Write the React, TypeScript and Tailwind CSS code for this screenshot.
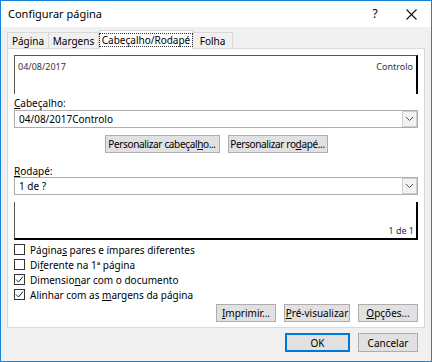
import React from 'react';

const font = { fontFamily: '"Noto Sans", "Liberation Sans", sans-serif' };

const Chevron = () => (
  <svg width="9" height="6" viewBox="0 0 9 6" fill="none">
    <path d="M1 1 L4.5 4.5 L8 1" stroke="#555" strokeWidth="1" />
  </svg>
);

const Select: React.FC<{ value: string }> = ({ value }) => (
  <div className="h-[18px] border border-[#adadad] bg-white flex items-center">
    <span className="flex-1 pl-[4px] text-[10px] leading-none">{value}</span>
    <div className="w-[15px] h-[16px] border border-[#cfcfcf] bg-[#f3f3f3] flex items-center justify-center">
      <Chevron />
    </div>
  </div>
);

const Button: React.FC<{ children: React.ReactNode; w: string; primary?: boolean }> = ({ children, w, primary }) => (
  <button
    className={
      'bg-[#e1e1e1] text-[10px] leading-none text-black flex items-center justify-center ' +
      w +
      (primary ? ' border-2 border-[#0078d7]' : ' border border-[#adadad]')
    }
  >
    <span className="whitespace-nowrap">{children}</span>
  </button>
);

const Check: React.FC<{ checked?: boolean; children: React.ReactNode }> = ({ checked, children }) => (
  <div className="h-[15px] flex items-center gap-[5px]">
    <div className="w-[11px] h-[11px] border border-[#333] bg-white flex items-center justify-center">
      {checked && (
        <svg width="9" height="9" viewBox="0 0 9 9" fill="none">
          <path d="M1 4.5 L3.5 7 L8 1.5" stroke="#222" strokeWidth="1" />
        </svg>
      )}
    </div>
    <span className="text-[10px] leading-none">{children}</span>
  </div>
);

export default function App() {
  return (
    <div style={font} className="w-[432px] h-[362px] border border-[#1883d7] bg-[#f0f0f0] flex flex-col text-black select-none">
      {/* title bar */}
      <div className="h-[26px] bg-white flex items-center pl-[7px]">
        <span className="text-[11px] flex-1">Configurar página</span>
        <span className="text-[12px] w-[14px] mr-[24px] text-center">?</span>
        <svg width="11" height="11" viewBox="0 0 11 11" className="mr-[14px]">
          <path d="M0.5 0.5 L10.5 10.5 M10.5 0.5 L0.5 10.5" stroke="#111" strokeWidth="1.1" />
        </svg>
      </div>

      {/* tabs */}
      <div className="h-[21px] px-[6px] flex items-end text-[10px] leading-none">
        <div className="h-[16px] w-[42px] border border-b-0 border-[#d9d9d9] flex items-center justify-center">Página</div>
        <div className="h-[16px] w-[50px] border border-l-0 border-b-0 border-[#d9d9d9] flex items-center justify-center">Margens</div>
        <div className="h-[19px] w-[94px] border border-b-0 border-[#d9d9d9] bg-white flex items-center justify-center relative z-10 -mb-[1px]">
          <span className="border border-dotted border-[#333] px-[2px] py-[1px]">Cabeçalho/Rodapé</span>
        </div>
        <div className="h-[16px] w-[40px] border border-l-0 border-b-0 border-[#d9d9d9] flex items-center justify-center">Folha</div>
      </div>

      {/* panel */}
      <div className="mx-[6px] h-[280px] border border-[#d9d9d9] bg-white px-[6px] pt-[6px] flex flex-col">
        <div className="h-[39px] border-t border-l border-[#555] border-r-2 border-r-black flex justify-between items-start px-[3px] pt-[6px] text-[9px] text-[#333] leading-none">
          <span>04/08/2017</span>
          <span>Controlo</span>
        </div>

        <div className="mt-[2px] text-[10px] leading-none h-[12px] flex items-end"><span><u>C</u>abeçalho:</span></div>
        <div className="mt-[2px]"><Select value="04/08/2017Controlo" /></div>

        <div className="mt-[7px] flex justify-center gap-[8px] tracking-[-0.35px]">
          <Button w="w-[115px] h-[18px]">Personalizar cabeçal<u>h</u>o...</Button>
          <Button w="w-[100px] h-[18px]">Personalizar ro<u>d</u>apé...</Button>
        </div>

        <div className="mt-[11px] text-[10px] leading-none h-[12px] flex items-end"><span><u>R</u>odapé:</span></div>
        <div className="mt-[1px]"><Select value="1 de ?" /></div>

        <div className="mt-[7px] h-[38px] border-l border-[#555] border-r-2 border-r-black border-b-2 border-b-black flex justify-end items-end px-[2px] pb-[3px] text-[9px] text-[#333] leading-none">
          <span>1 de 1</span>
        </div>

        <div className="mt-[2px] flex flex-col">
          <Check>Página<u>s</u> pares e ímpares diferentes</Check>
          <Check>Di<u>f</u>erente na 1ª página</Check>
          <Check checked>Dimensio<u>n</u>ar com o documento</Check>
          <Check checked>Alinhar com as <u>m</u>argens da página</Check>
        </div>

        <div className="mt-[2px] flex justify-end gap-[8px]">
          <Button w="w-[60px] h-[18px]"><u>I</u>mprimir...</Button>
          <Button w="w-[66px] h-[18px]"><u>P</u>ré-visualizar</Button>
          <Button w="w-[60px] h-[18px]"><u>O</u>pções...</Button>
        </div>
      </div>

      {/* bottom buttons */}
      <div className="mt-[5px] pr-[13px] flex justify-end gap-[8px]">
        <Button w="w-[65px] h-[19px]" primary>OK</Button>
        <Button w="w-[60px] h-[19px]">Cancelar</Button>
      </div>
    </div>
  );
}
